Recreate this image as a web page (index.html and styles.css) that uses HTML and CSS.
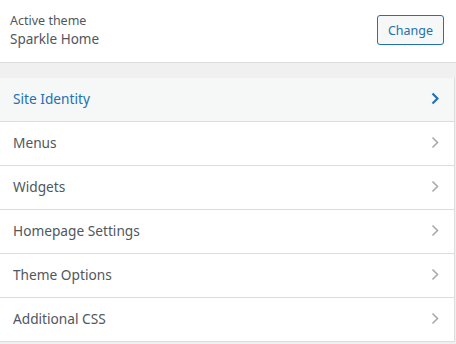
FILE: index.html
```html
<!DOCTYPE html>
<html lang="en">
<head>
  <meta charset="UTF-8" />
  <title>Customize</title>
  <link rel="stylesheet" href="styles.css">
</head>
<body>
  <div id="panel">
    <!-- Active theme -->
    <div id="theme-info">
      <div class="theme-text">
        <span class="theme-label">Active theme</span>
        <span class="theme-name">Sparkle Home</span>
      </div>
      <button class="change-btn">Change</button>
    </div>

    <!-- Sections -->
    <ul id="sections">
      <li class="section active">
        <span>Site Identity</span>
        <svg class="chevron" width="8" height="13" viewBox="0 0 8 13"><path d="M1.5 1.5 L6.5 6.5 L1.5 11.5" /></svg>
      </li>
      <li class="section">
        <span>Menus</span>
        <svg class="chevron" width="8" height="13" viewBox="0 0 8 13"><path d="M1.5 1.5 L6.5 6.5 L1.5 11.5" /></svg>
      </li>
      <li class="section">
        <span>Widgets</span>
        <svg class="chevron" width="8" height="13" viewBox="0 0 8 13"><path d="M1.5 1.5 L6.5 6.5 L1.5 11.5" /></svg>
      </li>
      <li class="section">
        <span>Homepage Settings</span>
        <svg class="chevron" width="8" height="13" viewBox="0 0 8 13"><path d="M1.5 1.5 L6.5 6.5 L1.5 11.5" /></svg>
      </li>
      <li class="section">
        <span>Theme Options</span>
        <svg class="chevron" width="8" height="13" viewBox="0 0 8 13"><path d="M1.5 1.5 L6.5 6.5 L1.5 11.5" /></svg>
      </li>
      <li class="section">
        <span>Additional CSS</span>
        <svg class="chevron" width="8" height="13" viewBox="0 0 8 13"><path d="M1.5 1.5 L6.5 6.5 L1.5 11.5" /></svg>
      </li>
    </ul>
  </div>
</body>
</html>
```

FILE: styles.css
```css
/* ---------- Global ---------- */
* {
  box-sizing: border-box;
}
body {
  margin: 0;
  background-color: #f0f0f1;
  font-family: "Noto Sans", "Open Sans", sans-serif;
  color: #50575e;
}

/* ---------- Active theme ---------- */
#theme-info {
  display: flex;
  align-items: center;
  justify-content: space-between;
  height: 63px;
  padding: 0 12px 2px 10px;
  background-color: #fff;
  border-bottom: 1px solid #dcdcde;
}
.theme-text {
  display: flex;
  flex-direction: column;
}
.theme-label {
  font-size: 12.5px;
  line-height: 19px;
  color: #50575e;
}
.theme-name {
  font-size: 13.5px;
  line-height: 19px;
  color: #50575e;
}
.change-btn {
  font-family: inherit;
  font-size: 12.5px;
  color: #2271b1;
  background-color: #f6f7f7;
  border: 1px solid #2271b1;
  border-radius: 3px;
  padding: 0 10px;
  height: 30px;
  cursor: pointer;
}

/* ---------- Sections ---------- */
#sections {
  list-style: none;
  margin: 15px 0 0;
  padding: 0;
}
.section {
  display: flex;
  align-items: center;
  justify-content: space-between;
  width: 455px;
  height: 44px;
  padding: 0 15px 2px 13px;
  background-color: #fff;
  border-right: 1px solid #dcdcde;
  border-bottom: 1px solid #dcdcde;
  font-size: 13.7px;
  color: #50575e;
}
.section.active {
  background-color: #f6f7f7;
  color: #2271b1;
}
.chevron path {
  fill: none;
  stroke: #a7aaad;
  stroke-width: 1.6;
}
.section.active .chevron path {
  stroke: #2271b1;
  stroke-width: 2.2;
}
```
